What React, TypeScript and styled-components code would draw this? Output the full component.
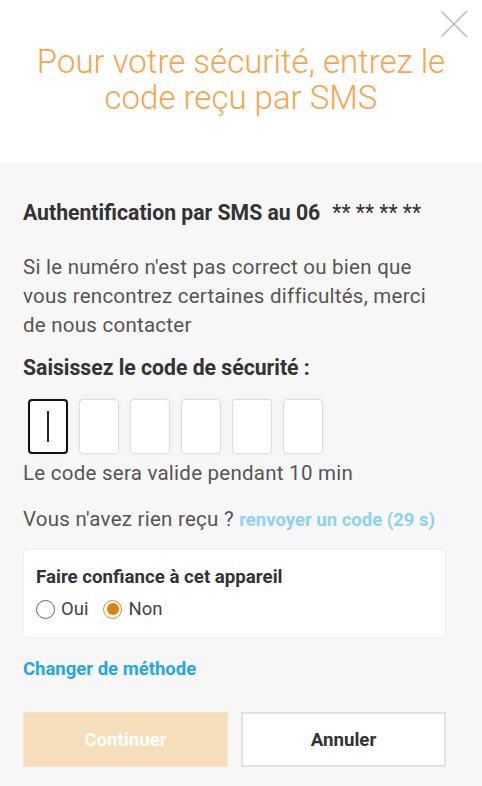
import React, { useState } from 'react';
import styled, { createGlobalStyle } from 'styled-components';

const GlobalStyle = createGlobalStyle`
  html, body {
    margin: 0;
    padding: 0;
    background: #f7f7f7;
    font-family: Roboto, 'Liberation Sans', Arial, sans-serif;
  }
  * {
    box-sizing: border-box;
  }
`;

const Page = styled.div`
  width: 482px;
  min-height: 786px;
  background: #f7f7f7;
`;

const Header = styled.header`
  position: relative;
  height: 163px;
  background: #ffffff;
  padding-top: 44px;
`;

const Title = styled.h1`
  margin: 0;
  text-align: center;
  font-weight: 300;
  font-size: 33px;
  line-height: 36px;
  color: #f6a54c;
`;

const CloseButton = styled.button`
  position: absolute;
  top: 10px;
  right: 14px;
  width: 28px;
  height: 28px;
  padding: 0;
  border: none;
  background: transparent;
  cursor: pointer;
`;

const Body = styled.main`
  padding: 38px 36px 20px 23px;
`;

const SectionTitle = styled.h2<{ $top?: number }>`
  margin: ${(p) => p.$top ?? 0}px 0 0;
  font-size: 21.2px;
  line-height: 24px;
  font-weight: 700;
  color: #333333;
  white-space: nowrap;
`;

const Masked = styled.span`
  font-weight: 400;
  margin-left: 12px;
`;

const Text = styled.p<{ $top: number; $lh?: number }>`
  margin: ${(p) => p.$top}px 0 0;
  font-size: 20.5px;
  letter-spacing: 0.25px;
  line-height: ${(p) => p.$lh ?? 24}px;
  color: #555555;
  white-space: nowrap;
`;

const CodeRow = styled.div`
  display: flex;
  gap: 11px;
  margin: 19px 0 0 5px;
`;

const CodeBox = styled.div<{ $active?: boolean }>`
  position: relative;
  width: 40px;
  height: 55px;
  background: #ffffff;
  border: ${(p) => (p.$active ? '2px solid #111111' : '1px solid #dddddd')};
  border-radius: 4px;
  box-shadow: 0 0 8px rgba(0, 0, 0, 0.04);
`;

const Caret = styled.span`
  position: absolute;
  left: 50%;
  top: 10px;
  bottom: 10px;
  width: 2px;
  margin-left: -1px;
  background: #222222;
`;

const ResendLink = styled.a`
  font-size: 18.5px;
  letter-spacing: 0;
  color: #8dd2f1;
  font-weight: 700;
  text-decoration: none;
  cursor: pointer;
`;

const TrustCard = styled.section`
  margin-top: 17px;
  height: 89px;
  background: #ffffff;
  border: 1px dotted #e2e2e2;
  border-radius: 5px;
  padding: 15px 12px 0;
`;

const CardTitle = styled.div`
  font-size: 18.7px;
  line-height: 24px;
  font-weight: 700;
  color: #333333;
`;

const RadioRow = styled.div`
  display: flex;
  align-items: center;
  gap: 15px;
  margin-top: 8px;
`;

const RadioLabel = styled.label`
  display: flex;
  align-items: center;
  gap: 6px;
  font-size: 18.5px;
  line-height: 24px;
  color: #444444;
  cursor: pointer;
`;

const RadioCircle = styled.span<{ $checked: boolean }>`
  position: relative;
  width: 19px;
  height: 19px;
  border-radius: 50%;
  border: 1.5px solid ${(p) => (p.$checked ? '#e88a1a' : '#666666')};
  background: #ffffff;

  &::after {
    content: '';
    display: ${(p) => (p.$checked ? 'block' : 'none')};
    position: absolute;
    inset: 2.5px;
    border-radius: 50%;
    background: #dc820f;
  }
`;

const MethodLink = styled.a`
  display: block;
  margin-top: 19px;
  font-size: 18.5px;
  line-height: 24px;
  font-weight: 700;
  color: #27a7df;
  text-decoration: none;
  cursor: pointer;
`;

const Actions = styled.div`
  display: grid;
  grid-template-columns: 1fr 1fr;
  gap: 13px;
  margin-top: 31px;
`;

const Button = styled.button<{ $primary?: boolean }>`
  height: 55px;
  font-family: inherit;
  font-size: 18.7px;
  font-weight: 700;
  border-radius: 0;
  cursor: pointer;
  color: ${(p) => (p.$primary ? '#ffffff' : '#333333')};
  background: ${(p) => (p.$primary ? '#f8dfbb' : '#ffffff')};
  border: ${(p) => (p.$primary ? '1px solid #f8e3c4' : '2px solid #e2e2e2')};
`;

export default function App() {
  const [trust, setTrust] = useState<'oui' | 'non'>('non');

  return (
    <Page>
      <GlobalStyle />
      <Header>
        <Title>
          Pour votre sécurité, entrez le
          <br />
          code reçu par SMS
        </Title>
        <CloseButton aria-label="Fermer">
          <svg width="28" height="28" viewBox="0 0 28 28">
            <path d="M1 1 L27 27 M27 1 L1 27" stroke="#bdbdbd" strokeWidth="1.6" fill="none" />
          </svg>
        </CloseButton>
      </Header>
      <Body>
        <SectionTitle>
          Authentification par SMS au 06<Masked>** ** ** **</Masked>
        </SectionTitle>
        <Text $top={28} $lh={29}>
          Si le numéro n'est pas correct ou bien que
          <br />
          vous rencontrez certaines difficultés, merci
          <br />
          de nous contacter
        </Text>
        <SectionTitle $top={16}>Saisissez le code de sécurité :</SectionTitle>
        <CodeRow>
          {[0, 1, 2, 3, 4, 5].map((i) => (
            <CodeBox key={i} $active={i === 0}>
              {i === 0 && <Caret />}
            </CodeBox>
          ))}
        </CodeRow>
        <Text $top={7}>Le code sera valide pendant 10 min</Text>
        <Text $top={22}>
          Vous n'avez rien reçu ? <ResendLink>renvoyer un code (29 s)</ResendLink>
        </Text>
        <TrustCard>
          <CardTitle>Faire confiance à cet appareil</CardTitle>
          <RadioRow>
            <RadioLabel onClick={() => setTrust('oui')}>
              <RadioCircle $checked={trust === 'oui'} />
              Oui
            </RadioLabel>
            <RadioLabel onClick={() => setTrust('non')}>
              <RadioCircle $checked={trust === 'non'} />
              Non
            </RadioLabel>
          </RadioRow>
        </TrustCard>
        <MethodLink>Changer de méthode</MethodLink>
        <Actions>
          <Button $primary>Continuer</Button>
          <Button>Annuler</Button>
        </Actions>
      </Body>
    </Page>
  );
}
